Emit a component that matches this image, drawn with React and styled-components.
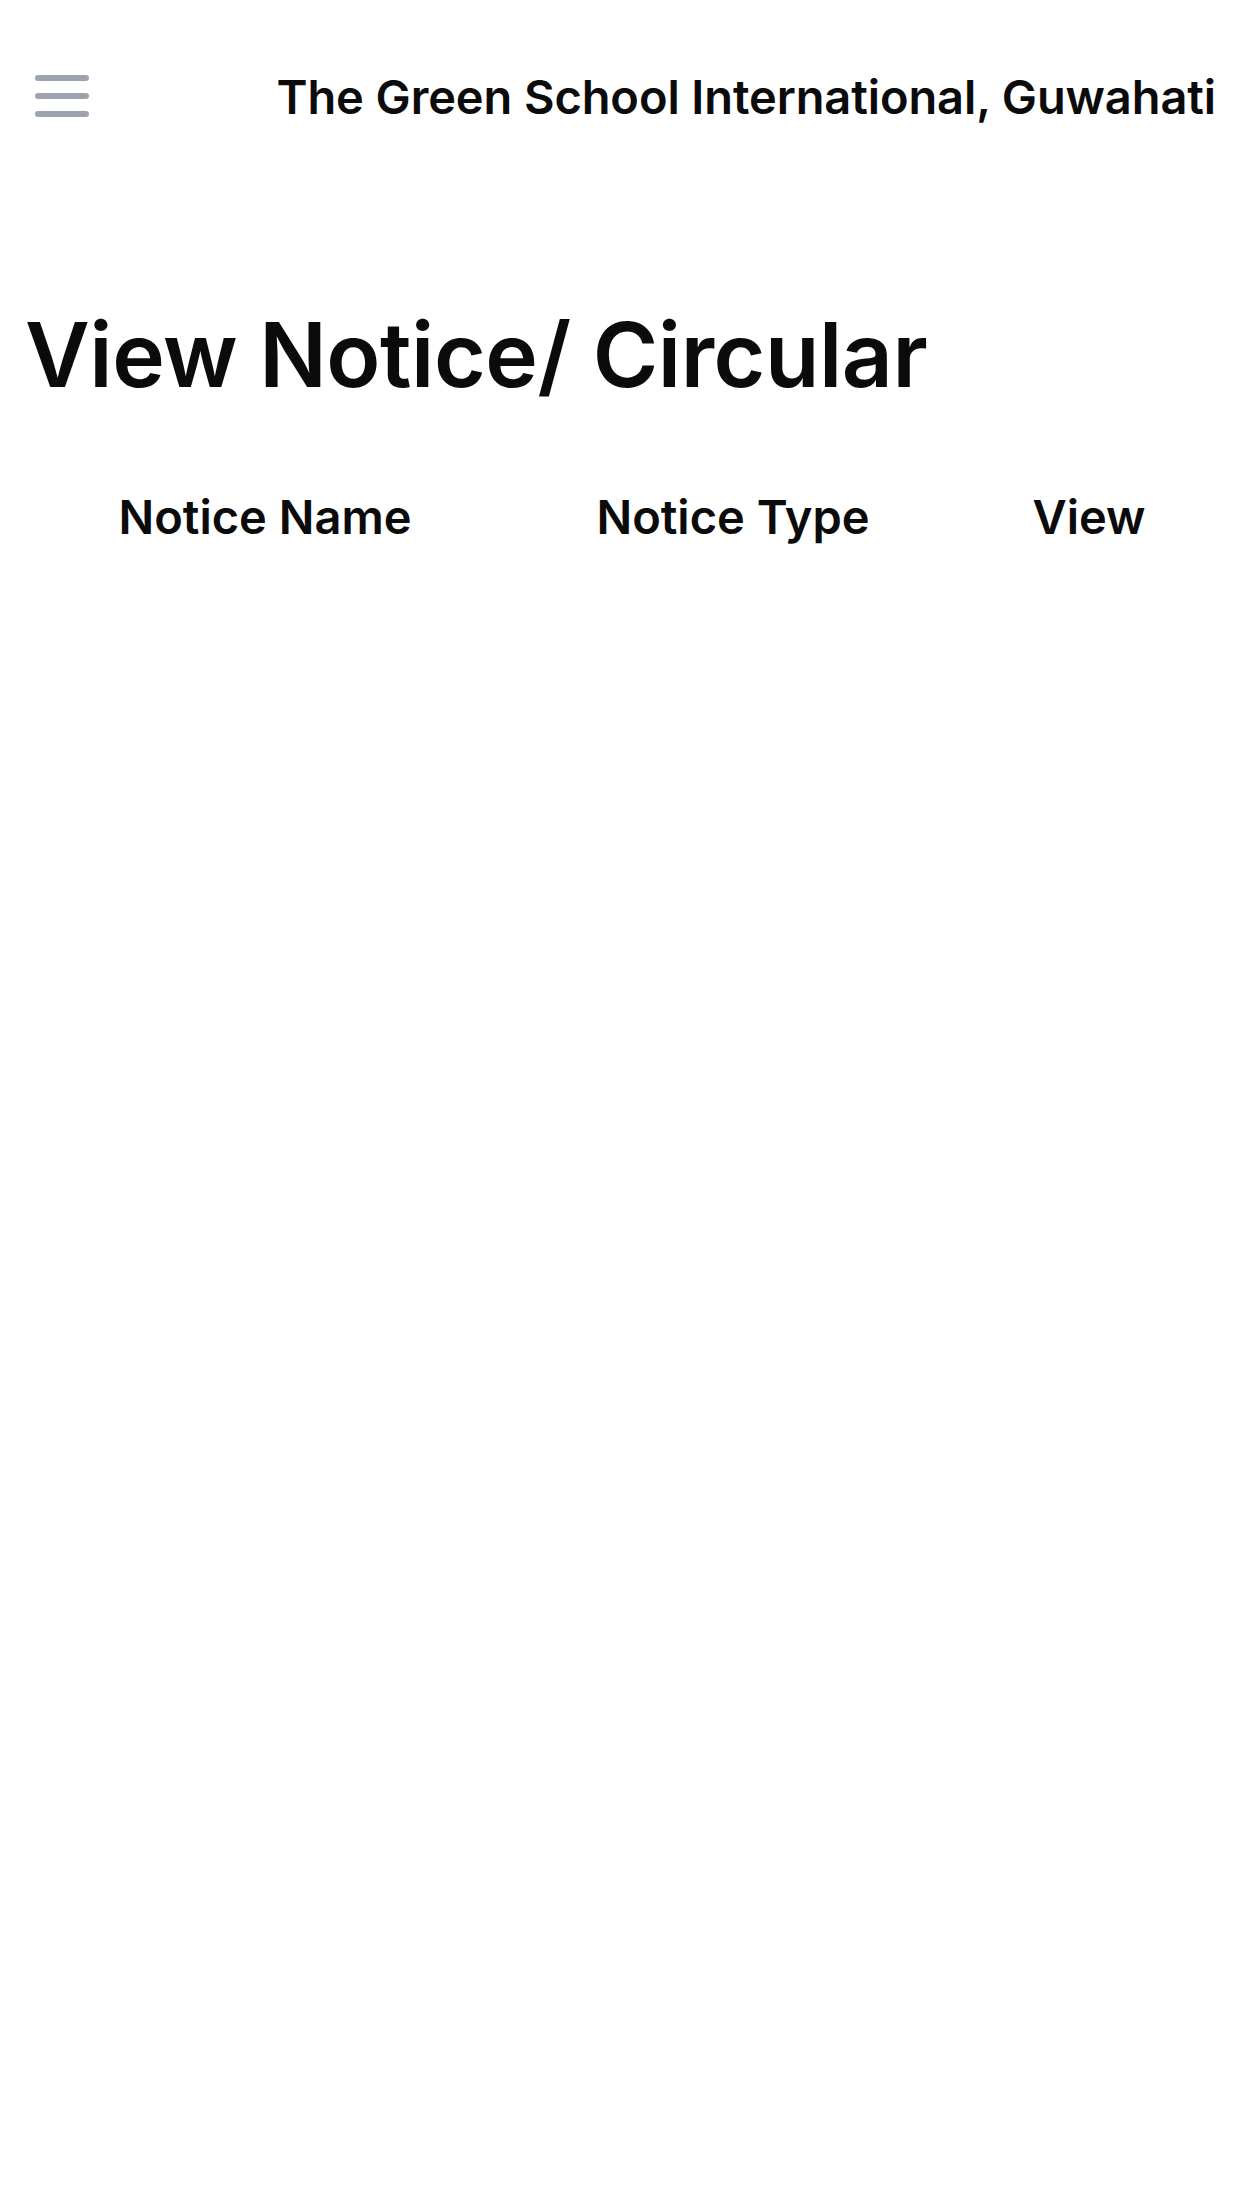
import React from 'react';
import styled, { createGlobalStyle } from 'styled-components';

const Global = createGlobalStyle`
  html, body {
    margin: 0;
    padding: 0;
    background: #ffffff;
  }
  body {
    font-family: Inter, "Noto Sans", "Liberation Sans", sans-serif;
    color: #0b0b0c;
  }
`;

const Page = styled.div`
  width: 1242px;
  min-height: 2208px;
  background: #ffffff;
`;

const TopBar = styled.header`
  display: flex;
  align-items: center;
  justify-content: space-between;
  height: 192px;
  padding: 0 26px;
  box-sizing: border-box;
`;

const MenuButton = styled.button`
  display: flex;
  padding: 0;
  border: 0;
  background: none;
  color: #9ca3af;
  cursor: pointer;
`;

const SchoolName = styled.h2`
  margin: 0;
  font-size: 47px;
  font-weight: 600;
  letter-spacing: -0.1px;
`;

const Main = styled.main`
  padding: 0 25px;
`;

const Title = styled.h1`
  margin: 118px 0 0;
  font-size: 89px;
  font-weight: 600;
  line-height: 1;
  letter-spacing: -0.45px;
`;

const Table = styled.div`
  display: grid;
  grid-template-columns: 480px 456px 256px;
  margin-top: 88px;
`;

const HeadCell = styled.div`
  text-align: center;
  font-size: 47px;
  font-weight: 600;
  line-height: 60px;
`;

function MenuIcon() {
  return (
    <svg width="72" height="72" viewBox="0 0 24 24" fill="none" stroke="currentColor" strokeWidth="2" strokeLinecap="round">
      <path d="M4 6h16M4 12h16M4 18h16" />
    </svg>
  );
}

export default function App() {
  const columns = ['Notice Name', 'Notice Type', 'View'];
  return (
    <Page>
      <Global />
      <TopBar>
        <MenuButton aria-label="Open menu"><MenuIcon /></MenuButton>
        <SchoolName>The Green School International, Guwahati</SchoolName>
      </TopBar>
      <Main>
        <Title>View Notice/ Circular</Title>
        <Table>
          {columns.map((c) => <HeadCell key={c}>{c}</HeadCell>)}
        </Table>
      </Main>
    </Page>
  );
}
